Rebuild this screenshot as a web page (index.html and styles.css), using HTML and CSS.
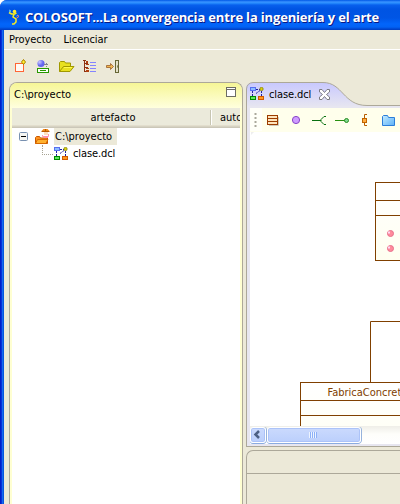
FILE: index.html
```html
<!DOCTYPE html>
<html lang="es">
<head>
<meta charset="utf-8">
<title>COLOSOFT</title>
<link rel="stylesheet" href="styles.css">
</head>
<body>
<svg class="defs" width="0" height="0"><defs>
<radialGradient id="ball" cx=".3" cy=".3"><stop offset="0" stop-color="#c8c8ff"/><stop offset="1" stop-color="#6464f0"/></radialGradient>
<linearGradient id="blue" x2="1" y2="1"><stop offset="0" stop-color="#c4ecff"/><stop offset="1" stop-color="#5cb0f8"/></linearGradient>
<linearGradient id="tab" x2="0" y2="1"><stop offset="0" stop-color="#c8c8ff"/><stop offset="1" stop-color="#e7e6f0"/></linearGradient>
<linearGradient id="cls" x2="0" y2="1"><stop offset="0" stop-color="#ffffff"/><stop offset="1" stop-color="#fffff0"/></linearGradient>
<symbol id="diagram" viewBox="0 0 15 14">
<path d="M2.500 4v5M11.500 4v5" stroke="#2020a0" stroke-dasharray="2 1" fill="none"/><path d="M6 2.500h4M6 6.500l4-3" stroke="#2020a0" stroke-dasharray="2 1"/>
<rect x=".5" y=".5" width="5" height="3" fill="#8cbcff" stroke="#5870f0"/>
<circle cx="11.500" cy="2" r="1.700" fill="#d8d010" stroke="#807800" stroke-width=".7"/>
<rect x=".5" y="9.500" width="5" height="3" fill="#60e860" stroke="#008800"/>
<rect x="8.500" y="9.500" width="5" height="3" fill="#ff9820" stroke="#d05800"/>
</symbol>
</defs></svg>
<div class="window">
<header class="titlebar">
<svg class="logo" width="12" height="18" viewBox="0 0 12 18"><path d="M1 4.500l2.500 1.500h3l2-1M6 6L5 9l3 2v3l-2 2H4" fill="none" stroke="#f8ee20" stroke-width="1.500"/><circle cx="6.500" cy="3.500" r="1.800" fill="#ffec30"/><path d="M1 2l2 1-2 1M8.500 8l1.500-1" fill="none" stroke="#70c8e8"/><path d="M10 7l.5 2-2 1" fill="none" stroke="#f08070"/></svg>
<span class="title">COLOSOFT...La convergencia entre la ingeniería y el arte</span>
</header>
<div class="client">
<nav class="menu"><span>Proyecto</span><span>Licenciar</span></nav>
<div class="tools">
<svg width="16" height="16"><rect x="2.500" y="4.500" width="8" height="8" fill="#fffaf4" stroke="#ff6535"/><path d="M10.500 .5l2 2.500-2 2.500-2-2.500z" fill="#f8dc10" stroke="#a88000"/><path d="M10.500 2v2M9.500 3h2" stroke="#fff040"/></svg>
<svg width="16" height="16"><circle cx="5" cy="4.500" r="3.600" fill="url(#ball)"/><path d="M8 5.500h4M10.500 4v4" stroke="#808090" stroke-dasharray="2 1"/><rect x="1.500" y="9.500" width="11" height="4" fill="#fff" stroke="#289800"/><path d="M4 11.500h6" stroke="#289800"/></svg>
<svg width="16" height="16"><path d="M.5 12.500v-9l1-1h4l1 1.500h5v3M.5 12.500l4-5h10.500l-4 5z" fill="#e8e020" stroke="#a09800"/><path d="M5 8.500h8" stroke="#fff850"/></svg>
<svg width="16" height="16"><path d="M2.500 1v12M1 1.500h3M3 4.500h3M3 8.500h3M3 12.500h3" fill="none" stroke="#8c3010"/><path d="M4 2h2v2H4zM4 5h3v1H4zM4 9h3v1H4zM4 11h3v2H4z" fill="#b04010"/><path d="M8 3.500h6M8 6.500h6M8 9.500h6M8 12.500h6" stroke="#8484ff"/></svg>
<svg width="16" height="16"><path d="M1.500 6.500h4v-2l3 3-3 3v-2h-4z" fill="#f0b850" stroke="#985c28" stroke-width=".8"/><rect x="10.500" y="1.500" width="3" height="12" fill="#e4e1c8" stroke="#666635"/><path d="M12 7h1v2" stroke="#666635" fill="none"/></svg>
</div>
<main class="workspace">
<section class="explorer">
<div class="explorer-head"><span>C:\proyecto</span><i class="maximize"></i></div>
<div class="table">
<div class="columns"><span class="artifact">artefacto</span><span class="author">autor</span></div>
<div class="row root"><svg width="9" height="9"><rect x=".5" y=".5" width="8" height="8" rx="1" fill="#f6f6f2" stroke="#7890b0"/><path d="M2 4.500h5" stroke="#000"/></svg>
<svg class="person" width="16" height="17"><path d="M.5 15.500v-6l1-1h3l1 1.500h7v5.500z" fill="#ff9320" stroke="#c85800"/><path d="M.5 15.500l2-4h10.500l-2 4z" fill="#ffb130" stroke="#d86800"/><rect x="9" y="4" width="4" height="3" fill="#ffdfc0"/><path d="M7 4V2.500L8.500 1h4L14 2.500V4z" fill="#f08818"/><path d="M10.500 1v2M6.500 3.500h8" stroke="#b85800"/><path d="M7.500 7v1.500h6V6" fill="none" stroke="#ff98b0"/><rect x="9" y="8" width="4" height="2" fill="#ff90ac"/></svg><span class="selected">C:\proyecto</span></div>
<div class="row child"><i class="branch"></i><svg width="15" height="14"><use href="#diagram"/></svg><span>clase.dcl</span></div>
</div>
</section>
<div class="right">
<section class="editor">
<div class="tab"><svg class="tab-shape" width="154" height="24"><path d="M0 24V6Q1 0 8 .5H77C97 .5 97 23.500 121 23.500H154V25H0z" fill="url(#tab)"/><path d="M.5 24V7Q1 1 7 .5H77C97 .5 97 23.500 121 23.500H154" fill="none" stroke="#aca899"/></svg>
<svg class="tab-icon" width="15" height="14"><use href="#diagram"/></svg><span>clase.dcl</span><svg class="close" width="11" height="11"><path d="M.5.5h2.500l2.500 3 2.500-3h2.500v2.500l-3 2.500 3 2.500v2.500H8l-2.500-3-2.500 3H.5V8l3-2.500-3-2.500z" fill="#fff" stroke="#7c7c84"/></svg></div>
<div class="editor-body">
<div class="palette"><svg width="150" height="23"><path d="M0 0h12v23H0z" fill="#fffff8"/>
<path d="M5.500 5v14" stroke="#aaa89c" stroke-width="2" stroke-dasharray="2 2"/>
<rect x="17.500" y="7.500" width="10" height="9" fill="#ffe4bc" stroke="#9c3c00"/><path d="M18 10.500h9M18 13.500h9" stroke="#9c3c00"/><path d="M28.500 9v8.500H19" fill="none" stroke="#cfcabc"/>
<circle cx="46" cy="12" r="3.600" fill="#ce9cff" stroke="#8844c8"/>
<path d="M62 12.500h9M76 8.500h-2l-3 3v2l3 3h2" fill="none" stroke="#087010"/>
<path d="M85 12.500h10" stroke="#289010"/><circle cx="96.500" cy="12.500" r="2" fill="#80d890" stroke="#288c20"/>
<path d="M117 6.500h-2.500v11h2.500" fill="none" stroke="#b85c00"/><rect x="112.500" y="10.500" width="4" height="4" fill="#ffad40" stroke="#c06400"/>
<path d="M132.500 17.500v-9l1-1h4l1 2h6v8z" fill="url(#blue)" stroke="#2b7dda"/></svg></div>
<svg class="canvas" width="150" height="294" viewBox="250 132 150 294">
<path d="M251 132h3l-3 3" fill="#eee"/>
<g fill="url(#cls)" stroke="#804000"><rect x="375.500" y="182.500" width="90" height="78"/><path d="M375.500 200.500H410M375.500 215.500H410"/><path d="M370.500 382V321.500H410" fill="none"/><rect x="300.500" y="382.500" width="180" height="78"/><path d="M300.500 400.500H410M300.500 415.500H410"/></g>
<g fill="#ff8b9c" stroke="#e8708c"><circle cx="390.500" cy="233.500" r="3"/><circle cx="390.500" cy="248.500" r="3"/></g><path d="M388 232.500h2M388 247.500h2" stroke="#ffd8f4" stroke-width="2"/>
<text x="327.500" y="396">FabricaConcreta</text></svg>
<div class="scrollbar"><div class="arrow"><svg width="14" height="14"><path d="M8 3L4.500 6.500 8 10" fill="none" stroke="#4d6185" stroke-width="2.500"/></svg></div><div class="thumb"><i class="grip"></i></div></div>
</div>
</section>
<section class="lower"><div class="lower-head"></div></section>
</div>
</main>
</div>
</div>
</body>
</html>
```
FILE: styles.css
```css
* { box-sizing: border-box; }
body { margin: 0; width: 400px; height: 504px; overflow: hidden; background: #fff; color: #000; font: 11px/15px "DejaVu Sans Condensed", "DejaVu Sans", sans-serif; font-stretch: condensed; letter-spacing: 0; white-space: nowrap; }
.defs { position: absolute; }
svg { display: block; flex: none; }
.window { height: 504px; border-top-left-radius: 7px; overflow: hidden; background: linear-gradient(90deg, #001ec8 0 1px, #0831d9 1px 2px, #166aee 2px 3px, #0855dd 3px 4px); }
.titlebar { height: 30px; display: flex; align-items: center; padding: 4px 0 0 8px; background: linear-gradient(#0058e6 0, #3a93ff 2px, #288eff 3px, #0860ed 5px, #0054e3 9px, #0055e5 18px, #0265fb 24px, #0262f4 27px, #0046d0 29px, #003dbf 30px); }
.title { margin-left: 5px; color: #fff; font: bold 13px/20px "Open Sans", sans-serif; font-stretch: normal; letter-spacing: -.17px; text-shadow: 1px 1px #0a1883; }
.client { margin-left: 4px; height: 474px; background: #ece9d8; }
.menu { height: 20px; padding: 2px 5px; display: flex; gap: 12px; border-bottom: 1px solid #fff; letter-spacing: -.05px; }
.tools { height: 32px; padding: 9px 9px 0; display: flex; gap: 7px; }
.workspace { height: 422px; margin-left: 5px; display: flex; gap: 3px; }
.explorer { width: 234px; flex: none; border: 1px solid #aca899; border-bottom: 0; border-radius: 8px 8px 0 0; background: #ffffd2; overflow: hidden; padding: 0 2px; }
.explorer-head { height: 25px; margin: 0 -2px; padding: 4px 6px 0 4px; display: flex; justify-content: space-between; background: linear-gradient(#f6f696, #ffffde); }
.maximize { width: 10px; height: 10px; background: #fff; border: 1px solid #6c6c64; border-top-width: 3px; border-top-style: double; }
.table { height: 396px; background: #fff; }
.columns { height: 20px; display: flex; align-items: center; background: #ebeadb; border-bottom: 1px solid #cbc7b8; box-shadow: inset 0 -1px #d6d2c2, inset 0 -2px #e2decd; overflow: hidden; }
.artifact { width: 199px; flex: none; text-align: center; border-right: 1px solid #c7c5b2; padding-left: 4px; }
.author { border-left: 1px solid #fff; padding-left: 8px; }
.row { display: flex; align-items: center; height: 17px; }
.root { padding-left: 7px; }
.person { margin: 0 3px 0 7px; }
.selected { background: #ece9d8; height: 17px; line-height: 17px; width: 63px; padding-left: 1px; }
.child { padding-left: 30px; letter-spacing: -.1px; }
.branch { width: 11px; height: 10px; margin-top: -8px; border: dotted #a7a394; border-width: 0 0 1px 1px; }
.child svg { margin: 0 4px 0 1px; }
.right { width: 154px; flex: none; }
.editor { height: 365px; }
.tab { height: 24px; position: relative; display: flex; align-items: center; padding-left: 4px; letter-spacing: -.1px; }
.tab-shape { position: absolute; left: 0; top: 0; }
.tab-icon, .tab span, .close { position: relative; }
.tab span { margin: 0 8px 0 4px; }
.editor-body { height: 341px; padding: 2px 0 0 3px; border: solid #aca899; border-width: 0 0 1px 1px; background: #e7e6f0; }
.palette { height: 24px; background: #ffffec; }
.canvas { background: #fff; }
.canvas text { font: 11px "DejaVu Sans Condensed", sans-serif; font-stretch: condensed; fill: #804000; letter-spacing: 0; }
.scrollbar { height: 18px; display: flex; padding-top: 1px; background: linear-gradient(#efeee8, #fefefa 8px, #fff); }
.arrow, .thumb { height: 16px; border: 1px solid #fff; border-radius: 3px; background: linear-gradient(#cbdafd, #bbcffc); box-shadow: inset 0 0 0 1px #acc3f8, 1px 0 #97b3dc, 0 1px #8aabe0; }
.arrow { width: 16px; }
.thumb { width: 94px; margin-left: 1px; padding: 4px 0 0 41px; }
.grip { display: block; width: 8px; height: 6px; background: repeating-linear-gradient(90deg, #eef4fe 0 1px, #8cb0f8 1px 2px); }
.lower { height: 54px; margin-top: 3px; border: solid #aca899; border-width: 1px 0 0 1px; border-top-left-radius: 7px; }
.lower-head { height: 23px; border-bottom: 1px solid #aca899; }
```
